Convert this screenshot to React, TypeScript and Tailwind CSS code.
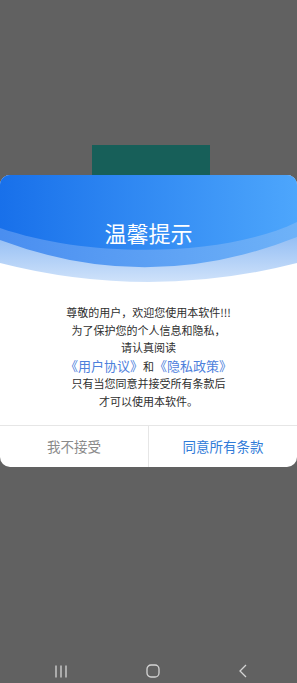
import React from "react"

const cjk = { fontFamily: '"Noto Sans CJK SC", "Noto Sans", sans-serif' }

function HeaderWave() {
  return (
    <svg className="absolute inset-0 h-full w-full" viewBox="0 0 297 110" preserveAspectRatio="none">
      <defs>
        <linearGradient id="dark" x1="0" y1="0" x2="1" y2="0">
          <stop offset="0" stopColor="#1870ea" />
          <stop offset="1" stopColor="#4da6fc" />
        </linearGradient>
        <linearGradient id="mid" x1="0" y1="0" x2="1" y2="0">
          <stop offset="0" stopColor="#4a8ef0" />
          <stop offset="1" stopColor="#6eb2f8" />
        </linearGradient>
        <linearGradient id="light" x1="0" y1="0" x2="0" y2="1">
          <stop offset="0.5" stopColor="#8ab8f3" />
          <stop offset="1" stopColor="#cfe2fa" />
        </linearGradient>
      </defs>
      <path d="M0 0 H297 V88 Q148.5 126 0 88 Z" fill="url(#light)" />
      <path d="M0 0 H297 V62 Q148.5 121 0 65 Z" fill="url(#mid)" />
      <path d="M0 0 H297 V47 C 225 82 90 84 0 53 Z" fill="url(#dark)" />
    </svg>
  )
}

export default function App() {
  return (
    <div className="flex h-[683px] w-[297px] flex-col bg-[#616161]" style={cjk}>
      {/* fondo de la app detrás del diálogo */}
      <div className="ml-[92px] mt-[145px] h-[30px] w-[118px] bg-[#175f59]" />

      {/* DIÁLOGO */}
      <div className="overflow-hidden rounded-[10px] bg-white">
        <div className="relative h-[110px]">
          <HeaderWave />
          <h1 className="relative pt-[42px] text-center text-[22px] leading-[30px] font-normal text-white">温馨提示</h1>
        </div>

        <div className="flex flex-col items-center pt-[19px] pb-[15px] text-[11px] leading-[17.5px] text-[#2e2e2e]">
          <p>尊敬的用户，欢迎您使用本软件!!!</p>
          <p>为了保护您的个人信息和隐私，</p>
          <p>请认真阅读</p>
          <p>
            <span className="text-[13px] text-[#4d80dc]">《用户协议》</span>
            和
            <span className="text-[13px] text-[#4d80dc]">《隐私政策》</span>
          </p>
          <p>只有当您同意并接受所有条款后</p>
          <p>才可以使用本软件。</p>
        </div>

        <div className="flex h-[42px] border-t border-[#e6e6e6]">
          <button className="flex flex-1 items-center justify-center text-[13.5px] text-[#8a8a8a]">我不接受</button>
          <div className="w-px bg-[#e6e6e6]" />
          <button className="flex flex-1 items-center justify-center text-[13.5px] text-[#2f7bd8]">同意所有条款</button>
        </div>
      </div>

      {/* BARRA DE NAVEGACIÓN */}
      <div className="mt-auto flex h-[24px] items-center justify-between pl-[54px] pr-[49px]">
        <svg width="14" height="13" viewBox="0 0 14 13">
          <path d="M2 0.5 V12.5 M7 0.5 V12.5 M12 0.5 V12.5" stroke="#d4d4d4" strokeWidth="1.3" />
        </svg>
        <svg width="14" height="14" viewBox="0 0 14 14">
          <rect x="1" y="1" width="12" height="12" rx="4" fill="none" stroke="#d4d4d4" strokeWidth="1.3" />
        </svg>
        <svg width="10" height="14" viewBox="0 0 10 14">
          <path d="M8 1 L2 7 L8 13" fill="none" stroke="#d4d4d4" strokeWidth="1.3" />
        </svg>
      </div>
    </div>
  )
}
